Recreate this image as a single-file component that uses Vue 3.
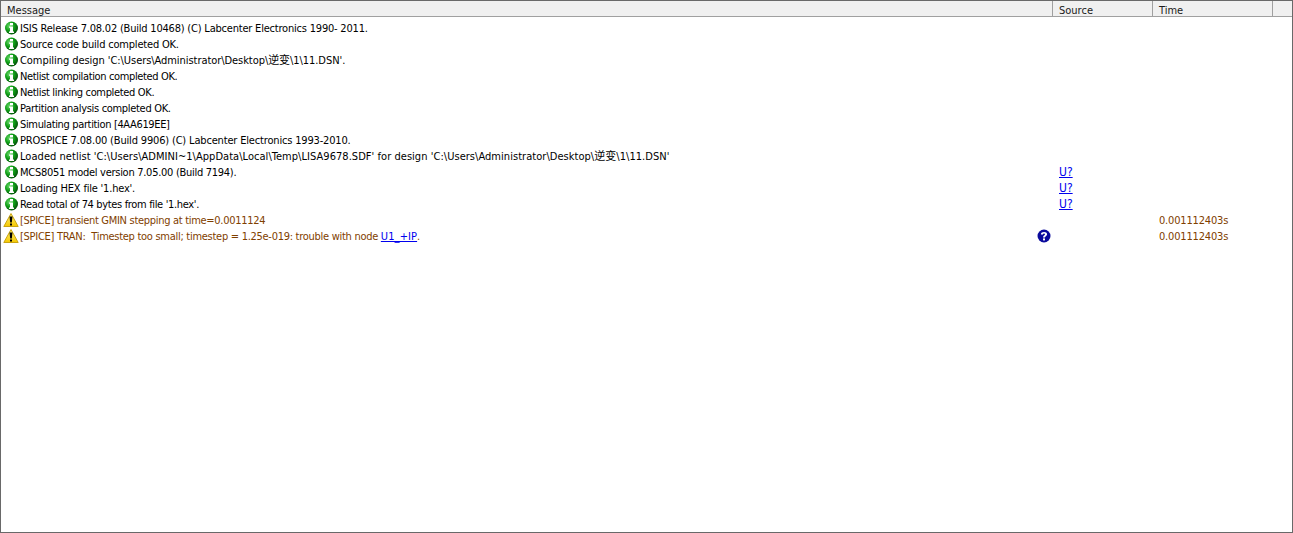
<script setup>
const D = 'C:\\Users\\Administrator\\Desktop\\逆变\\1\\11.DSN'
const rows = [
  { ls: -0.205, t: 'ISIS Release 7.08.02 (Build 10468) (C) Labcenter Electronics 1990- 2011.' },
  { ls: -0.19, t: 'Source code build completed OK.' },
  { ls: -0.06, t: `Compiling design '${D}'.` },
  { ls: -0.36, t: 'Netlist compilation completed OK.' },
  { ls: -0.34, t: 'Netlist linking completed OK.' },
  { ls: -0.31, t: 'Partition analysis completed OK.' },
  { ls: -0.35, t: 'Simulating partition [4AA619EE]' },
  { ls: -0.17, t: 'PROSPICE 7.08.00 (Build 9906) (C) Labcenter Electronics 1993-2010.' },
  { ls: 0.04, t: `Loaded netlist 'C:\\Users\\ADMINI~1\\AppData\\Local\\Temp\\LISA9678.SDF' for design '${D}'` },
  { ls: -0.28, t: 'MCS8051 model version 7.05.00 (Build 7194).', s: 'U?' },
  { ls: -0.2, t: "Loading HEX file '1.hex'.", s: 'U?' },
  { ls: -0.34, t: "Read total of 74 bytes from file '1.hex'.", s: 'U?' },
  { ls: -0.3, w: 1, t: '[SPICE] transient GMIN stepping at time=0.0011124', time: '0.001112403s' },
  { ls: -0.28, w: 1, t: '[SPICE] TRAN:  Timestep too small; timestep = 1.25e-019: trouble with node ', link: 'U1_+IP', after: '.', help: 1, time: '0.001112403s' },
]
</script>

<template>
  <div class="log">
    <svg width="0" height="0" class="defs">
      <defs>
        <radialGradient id="ball" cx="35%" cy="35%" r="70%">
          <stop offset="0" stop-color="#6fdc6f"/>
          <stop offset="0.5" stop-color="#10a018"/>
          <stop offset="1" stop-color="#05500a"/>
        </radialGradient>
        <linearGradient id="tri" x1="0" y1="0" x2="0" y2="1">
          <stop offset="0" stop-color="#fff27a"/>
          <stop offset="1" stop-color="#f5c800"/>
        </linearGradient>
      </defs>
    </svg>
    <div class="head">
      <div class="hc msg">Message</div>
      <div class="hc src">Source</div>
      <div class="hc tim">Time</div>
      <div class="hc fill"></div>
    </div>
    <div class="body">
      <div v-for="(r, i) in rows" :key="i" class="row" :class="{ warn: r.w }">
        <div class="msg cell">
          <svg v-if="r.w" class="ic" width="16" height="16" viewBox="0 0 16 16">
            <path d="M8 1.5 L15.2 14.5 H0.8 Z" fill="url(#tri)" stroke="#c9a410" stroke-width="1" stroke-linejoin="round"/>
            <path d="M6.5 4.5 H9.5 L8.8 10.5 H7.2 Z" fill="#000"/>
            <rect x="7" y="11.5" width="2" height="2" fill="#000"/>
          </svg>
          <svg v-else class="ic" width="16" height="16" viewBox="0 0 16 16">
            <circle cx="8.5" cy="8" r="6.5" fill="url(#ball)"/>
            <rect x="7" y="3" width="3" height="2.4" fill="#fff"/>
            <path d="M6 6.4 H10 V11.6 H11 V13 H6 V11.6 H7 V7.8 H6 Z" fill="#fff"/>
          </svg>
          <span class="txt" :style="{ letterSpacing: r.ls + 'px' }">{{ r.t }}<a v-if="r.link" class="lnk tag">{{ r.link }}</a>{{ r.after }}</span>
          <svg v-if="r.help" class="help" width="14" height="14" viewBox="0 0 14 14">
            <circle cx="7" cy="7" r="6.5" fill="#0a0a9c"/>
            <path d="M3.9 5.4 C3.9 2.2 10.1 2.2 10.1 5.2 C10.1 7 8 7 8 8.6 H6 C6 6.4 8 6.4 8 5.2 C8 4.3 6.1 4.3 6 5.4 Z" fill="#fff"/>
            <rect x="6" y="9.4" width="2" height="2" fill="#fff"/>
          </svg>
        </div>
        <div class="src cell"><a v-if="r.s" class="lnk wide">{{ r.s }}</a></div>
        <div class="tim cell"><span class="stamp">{{ r.time }}</span></div>
      </div>
    </div>
  </div>
</template>

<style scoped>
.log {
  box-sizing: border-box;
  width: 1293px;
  height: 533px;
  border: 1px solid #696969;
  background: #fff;
  font-family: "DejaVu Sans Condensed", "Liberation Sans", Arial, "Noto Sans CJK SC", sans-serif;
  font-stretch: condensed;
  font-size: 11px;
  color: #000;
  overflow: hidden;
  white-space: pre;
}
.defs { position: absolute; }
.head {
  display: flex;
  height: 15px;
  background: #f0f0f0;
  border-bottom: 1px solid #a0a0a0;
  line-height: 19px;
  color: #1a1a1a;
}
.hc {
  box-sizing: border-box;
  height: 15px;
  border-right: 1px solid #a0a0a0;
  padding-left: 6px;
}
.msg { width: 1052px; flex: none; }
.src { width: 100px; flex: none; }
.tim { width: 120px; flex: none; }
.fill { flex: 1; border-right: 0; }
.body { padding-top: 3px; }
.row { display: flex; height: 16px; line-height: 18px; }
.row.warn { color: #7f4000; }
.cell { box-sizing: border-box; display: flex; align-items: flex-start; height: 16px; }
.ic { margin: 0 1px 0 2px; flex: none; }
.txt { flex: 1; min-width: 0; }
.help { flex: none; margin: 1px 2px 0 0; }
.src.cell { padding-left: 6px; }
.tim.cell { padding-left: 6px; }
.stamp { letter-spacing: -0.17px; }
.wide { font-size: 12px; letter-spacing: 0; line-height: 16px; }
.tag { letter-spacing: 0.1px; }
.lnk { color: #0000ee; text-decoration: underline; }
</style>
